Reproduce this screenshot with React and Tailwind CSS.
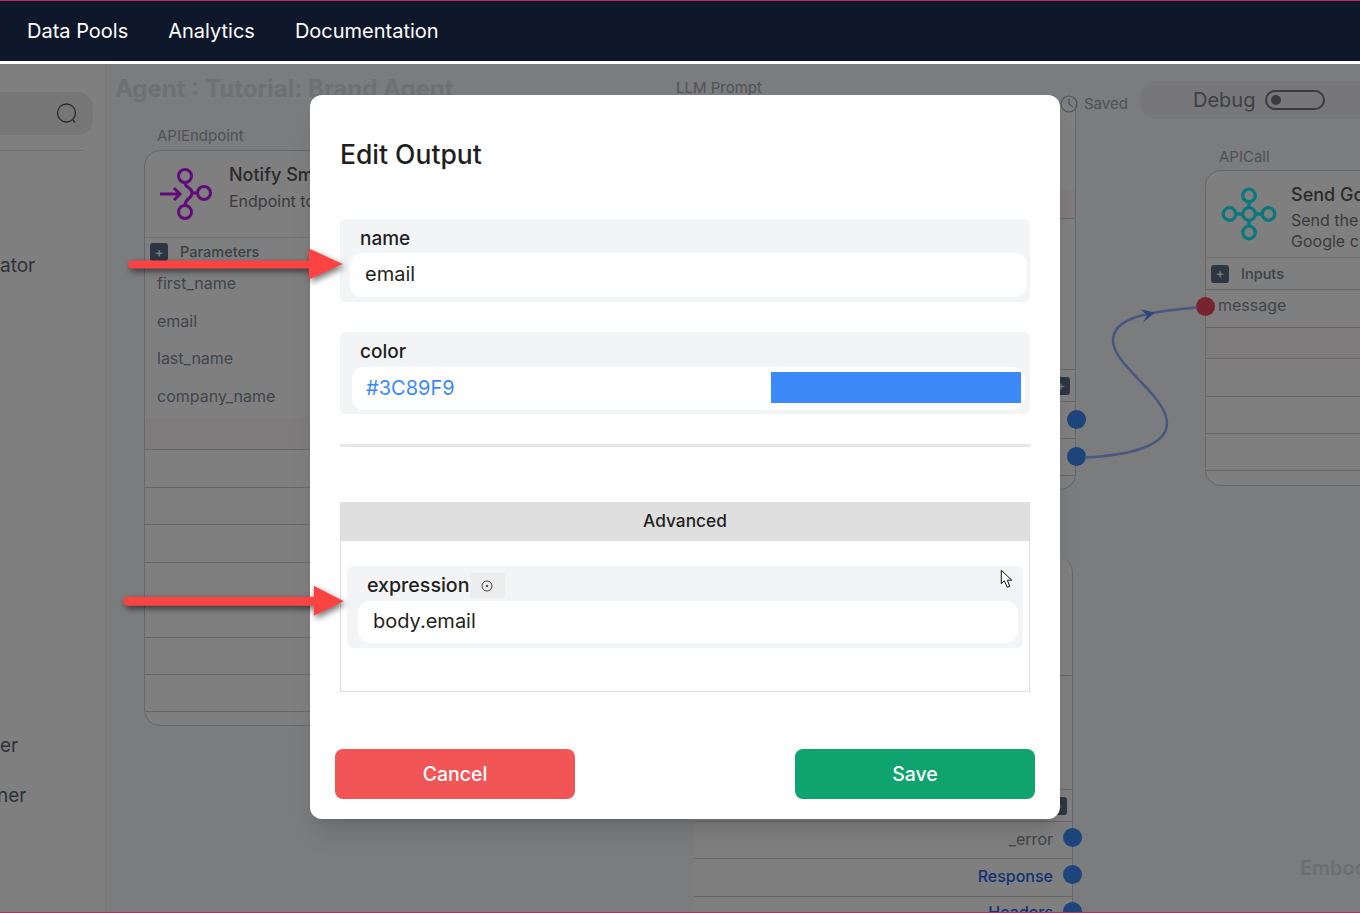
import React from "react";

const font = { fontFamily: "Inter, 'Noto Sans', sans-serif" };

const PlusBtn = () => (
	<span className="flex h-[18px] w-[18px] shrink-0 items-center justify-center rounded-[3px] bg-[#5a6c84] text-[13px] leading-none text-white">
		+
	</span>
);

const Rule = ({ h, tint }) => (
	<div
		className={`border-b border-[#cfcfcf] ${tint ? "bg-[#faf6f6]" : ""}`}
		style={{ height: h }}
	/>
);

const Dot = ({ className }) => (
	<span className={`absolute h-[19px] w-[19px] rounded-full ${className}`} />
);

const EndpointIcon = () => (
	<svg width="56" height="56" viewBox="0 0 56 56" fill="none" stroke="#c414f5" strokeWidth="3">
		<circle cx="26" cy="10" r="6.5" />
		<circle cx="45" cy="27" r="6.5" />
		<circle cx="26" cy="46" r="6.5" />
		<path d="M1 28h20M15 22l6 6-6 6" />
		<path d="M26 16.5c0 6 7 4 7 10.500s-7 4.500-7 12.500" />
		<path d="M33 27h5.500" />
	</svg>
);

const HubIcon = () => (
	<svg width="58" height="58" viewBox="0 0 58 58" fill="none" stroke="#10f0fa" strokeWidth="3.300">
		<circle cx="29" cy="29" r="6.300" />
		<circle cx="29" cy="10.500" r="6.300" />
		<circle cx="29" cy="47.500" r="6.300" />
		<circle cx="9.500" cy="29" r="6.300" />
		<circle cx="48.500" cy="29" r="6.300" />
		<path d="M29 17v5.500M29 35.500V41M16 29h6.500M35.500 29H42" />
	</svg>
);

const Sidebar = () => (
	<aside className="flex w-[106px] shrink-0 flex-col border-r border-[#f0f0f0] bg-white text-[19px] text-[#5c6470]">
		<div className="mt-7 flex h-[43px] w-[93px] items-center justify-end rounded-r-2xl bg-[#ececec] pr-[15px]">
			<svg width="22" height="22" viewBox="0 0 22 22" fill="none" stroke="#555" strokeWidth="1.300">
				<circle cx="10.500" cy="10" r="9" />
				<path d="M17 17l2 2.500" />
			</svg>
		</div>
		<div className="mt-[15px] h-px w-[84px] bg-[#e2e2e2]" />
		<div className="mt-[102px] leading-[26px]">ator</div>
		<div className="mt-[454px] leading-[26px]">er</div>
		<div className="mt-[24px] leading-[26px] -ml-[3px]">ner</div>
	</aside>
);

const Canvas = () => (
	<main className="relative flex-1 overflow-hidden bg-[#f7f8fc]" style={font}>
		<h1 className="absolute left-[9px] top-[9px] text-[24px] font-bold leading-8 text-[#dfe0e4]">
			Agent : Tutorial: Brand Agent
		</h1>

		{/* API endpoint node */}
		<div className="absolute left-[38px] top-[64px] w-[560px]">
			<div className="mb-[6px] h-[16px] pl-[13px] text-[15px] leading-4 text-[#a3a3a8]">APIEndpoint</div>
			<div className="h-[576px] rounded-2xl border border-[#cfcfcf] bg-white">
				<div className="flex h-[87px] items-center border-b border-[#e4e4e4] pl-[14px]">
					<EndpointIcon />
					<div className="ml-[14px] -mt-[15px]">
						<div className="text-[18px] font-medium leading-7 text-[#555]">Notify Smart</div>
						<div className="text-[16px] leading-6 text-[#777]">Endpoint to</div>
					</div>
				</div>
				<div className="flex h-[25px] items-center gap-[12px] pl-[5px] pt-[3px] text-[14.500px] font-medium text-[#7a818c]">
					<PlusBtn />
					Parameters
				</div>
				<div className="pb-[3px] pl-[12px] pt-[2px] text-[16px] leading-[37.500px] text-[#858b95]">
					<div>first_name</div>
					<div>email</div>
					<div>last_name</div>
					<div>company_name</div>
				</div>
				<Rule h={32} tint />
				<Rule h={38} />
				<Rule h={37} />
				<Rule h={38} />
				<Rule h={37} />
				<Rule h={38} />
				<Rule h={37} />
				<Rule h={37} />
			</div>
		</div>

		{/* LLM prompt node */}
		<div className="absolute left-[560px] top-[16px] w-[410px]">
			<div className="pl-[10px] text-[15px] leading-4 text-[#a3a3a8]">LLM Prompt</div>
			<div className="relative mt-[8px] h-[386px] rounded-b-2xl border-r border-b border-[#cfcfcf] bg-white pt-[85px]">
				<Rule h={30} tint />
				<Rule h={151} />
				<div className="flex h-[32px] items-center justify-end border-b border-[#cfcfcf] pr-[5px]">
					<PlusBtn />
				</div>
				<Rule h={37} />
				<Rule h={37} />
				<Dot className="right-[-11px] top-[306px] bg-[#3c89f9]" />
				<Dot className="right-[-11px] top-[343px] bg-[#3c89f9]" />
			</div>
		</div>

		{/* API call node */}
		<div className="absolute left-[1099px] top-[85px] w-[400px]">
			<div className="mb-[5px] h-[16px] pl-[14px] text-[15px] leading-4 text-[#a3a3a8]">APICall</div>
			<div className="relative h-[316px] rounded-2xl border border-[#cfcfcf] bg-white">
				<div className="flex h-[87px] items-center border-b border-[#e4e4e4] pl-[14px]">
					<HubIcon />
					<div className="ml-[13px] mt-[7px]">
						<div className="mb-[3px] text-[18px] font-medium leading-6 text-[#555]">Send Google</div>
						<div className="text-[16px] leading-[21px] text-[#777]">Send the</div>
						<div className="text-[16px] leading-[21px] text-[#777]">Google c</div>
					</div>
				</div>
				<div className="flex h-[32px] items-center gap-[12px] border-b border-[#cfcfcf] pl-[5px] text-[14.500px] font-medium text-[#7a818c]">
					<PlusBtn />
					Inputs
				</div>
				<div className="h-[38px] border-b border-[#cfcfcf] pl-[12px] text-[16px] leading-[30px] text-[#858b95]">message</div>
				<Rule h={31} tint />
				<Rule h={38} />
				<Rule h={37} />
				<Rule h={37} />
				<Dot className="left-[-10px] top-[126px] bg-[#f0485e]" />
			</div>
		</div>

		{/* Output node at the bottom */}
		<div className="absolute left-[588px] top-[493px] h-[360px] w-[379px] rounded-t-2xl border-r border-[#cfcfcf] bg-white pt-[90px]">
			<Rule h={29} />
			<Rule h={114} />
			<div className="flex h-[32px] items-center justify-end border-b border-[#cfcfcf] pr-[19px]">
				<span className="-mr-[14px]">
					<PlusBtn />
				</span>
			</div>
			<div className="flex h-[37px] items-center justify-end border-b border-[#cfcfcf] pb-[3px] pr-[19px] text-[16px] text-[#858b95]">_error</div>
			<div className="flex h-[38px] items-center justify-end border-b border-[#cfcfcf] pb-[4px] pr-[19px] text-[16px] font-medium text-[#2563eb]">Response</div>
			<div className="flex h-[30px] items-center justify-end pr-[19px] text-[16px] font-medium text-[#2563eb]">Headers</div>
			<Dot className="right-[-10px] top-[271px] bg-[#3c89f9]" />
			<Dot className="right-[-10px] top-[308px] bg-[#3c89f9]" />
			<Dot className="right-[-10px] top-[345px] bg-[#3c89f9]" />
		</div>

		<div className="absolute left-[1194px] top-[789px] text-[20px] font-semibold text-[#dcdde2]">Embod</div>

		{/* Edge between the nodes */}
		<svg className="absolute left-0 top-0 h-full w-full" viewBox="0 0 1254 847" fill="none">
			<path
				d="M979 393C1024 391 1061 381 1061 359C1061 331 1007 301 1007 276C1007 258 1029 252 1044 249C1064 245 1079 244 1091 243"
				stroke="#8fb0ff"
				strokeWidth="2.500"
			/>
			<path d="M1049 248L1035 245L1041 251L1037 258Z" fill="#5b88f0" />
		</svg>

		{/* Toolbar */}
		<div className="absolute left-[954px] top-[29px] flex items-center gap-[6px] text-[15px] text-[#a3a3a8]">
			<svg width="18" height="18" viewBox="0 0 18 18" fill="none" stroke="#a3a3a8" strokeWidth="1.200">
				<circle cx="9" cy="9" r="8" />
				<path d="M9 4v5l4 3" />
			</svg>
			Saved
		</div>
		<div className="absolute left-[1034px] top-[17px] flex h-[38px] w-[300px] items-center rounded-2xl bg-[#eeeff2] pb-[1px] pl-[53px] text-[20px] text-[#808084]">
			Debug
			<span className="ml-[10px] flex h-[20px] w-[60px] items-center rounded-full border-2 border-[#777] pl-[4px]">
				<span className="h-[10px] w-[10px] rounded-full bg-[#777]" />
			</span>
		</div>
	</main>
);

const FieldBox = ({ label, children, className = "" }) => (
	<div className={`rounded-md bg-[#f3f4f6] ${className}`}>
		{label}
		{children}
	</div>
);

const Modal = () => (
	<div className="ml-[310px] mt-[31px] h-[724px] w-[750px] rounded-xl bg-white px-[30px] pt-[40px] text-[#1f1f23] shadow-xl">
		<h2 className="text-[26.500px] font-medium leading-[38px]">Edit Output</h2>

		<FieldBox
			className="mt-[46px] h-[83px] pl-[10px] pr-[3px]"
			label={<div className="h-[34px] pl-[10px] pt-[7px] text-[19px] font-medium leading-[26px]">name</div>}
		>
			<div className="flex h-[44px] items-center rounded-xl bg-white pb-[2px] pl-[15px] text-[20px]">email</div>
		</FieldBox>

		<FieldBox
			className="mt-[30px] h-[82px] pl-[12px] pr-[5px]"
			label={<div className="h-[35px] pl-[8px] pt-[7px] text-[19px] font-medium leading-[26px]">color</div>}
		>
			<div className="flex h-[43px] items-center justify-between rounded-xl bg-white pl-[14px] pr-[4px] text-[20px] text-[#3c89f9]">
				<span className="-mt-[2px]">#3C89F9</span>
				<span className="-mt-[2px] h-[31px] w-[250px] bg-[#3c89f9]" />
			</div>
		</FieldBox>

		<div className="mt-[30px] h-[3px] bg-[#e5e7eb]" />

		<div className="mt-[55px] flex h-[39px] items-center justify-center bg-[#dfdfdf] pb-[1px] text-[17.300px] font-medium">Advanced</div>
		<div className="h-[151px] border border-t-0 border-[#e0e0e0] px-[6px] pt-[25px]">
			<FieldBox
				className="h-[82px] pl-[11px] pr-[5px]"
				label={
					<div className="flex h-[35px] items-center pl-[9px] pt-[4px] text-[19.600px] font-medium">
						expression
						<span className="flex h-[25px] w-[35px] items-center justify-center bg-[#ededed]">
							<svg width="12" height="12" viewBox="0 0 12 12" fill="none" stroke="#444" strokeWidth="1">
								<circle cx="6" cy="6" r="5" />
								<circle cx="6" cy="6" r="0.800" fill="#444" />
							</svg>
						</span>
					</div>
				}
			>
				<div className="flex h-[42px] items-center rounded-xl bg-white pb-[2px] pl-[15px] text-[20px]">body.email</div>
			</FieldBox>
		</div>

		<div className="-mx-[5px] mt-[57px] flex justify-between text-[19.500px] font-medium text-white">
			<button type="button" className="h-[50px] w-[240px] rounded-lg bg-[#f25555] pt-[2px]">Cancel</button>
			<button type="button" className="h-[50px] w-[240px] rounded-lg bg-[#0ea36f] pt-[2px]">Save</button>
		</div>
	</div>
);

const Annotations = () => (
	<svg className="pointer-events-none absolute left-0 top-0 h-full w-full" viewBox="0 0 1360 913" fill="none">
		<g className="drop-shadow-[2px_3px_3px_rgba(0,0,0,0.55)]" fill="#fb4343">
			<rect x="127" y="260" width="186" height="8" rx="4" />
			<path d="M308 248L342 263.500L308 279Z" />
			<rect x="122" y="597" width="196" height="9" rx="4.500" />
			<path d="M313 586L343 601.500L313 616Z" />
		</g>
		<path
			d="M1002 570.500V584L1005 581L1008 587.500L1010.500 586.500L1008 580.500L1012.500 580.500Z"
			fill="#fff"
			stroke="#111"
			strokeWidth="1"
		/>
	</svg>
);

const App = () => (
	<div className="relative flex h-[913px] w-[1360px] flex-col overflow-hidden border-y border-[#b92d63] bg-white" style={font}>
		<nav className="flex h-[60px] shrink-0 items-center gap-10 bg-[#0f172a] pl-[27px] text-[20px] text-white">
			<span>Data Pools</span>
			<span>Analytics</span>
			<span>Documentation</span>
		</nav>
		<div className="relative mt-[3px] flex flex-1 overflow-hidden">
			<Sidebar />
			<Canvas />
			<div className="absolute inset-0 bg-black/50">
				<Modal />
			</div>
		</div>
		<Annotations />
	</div>
);

export default App;
